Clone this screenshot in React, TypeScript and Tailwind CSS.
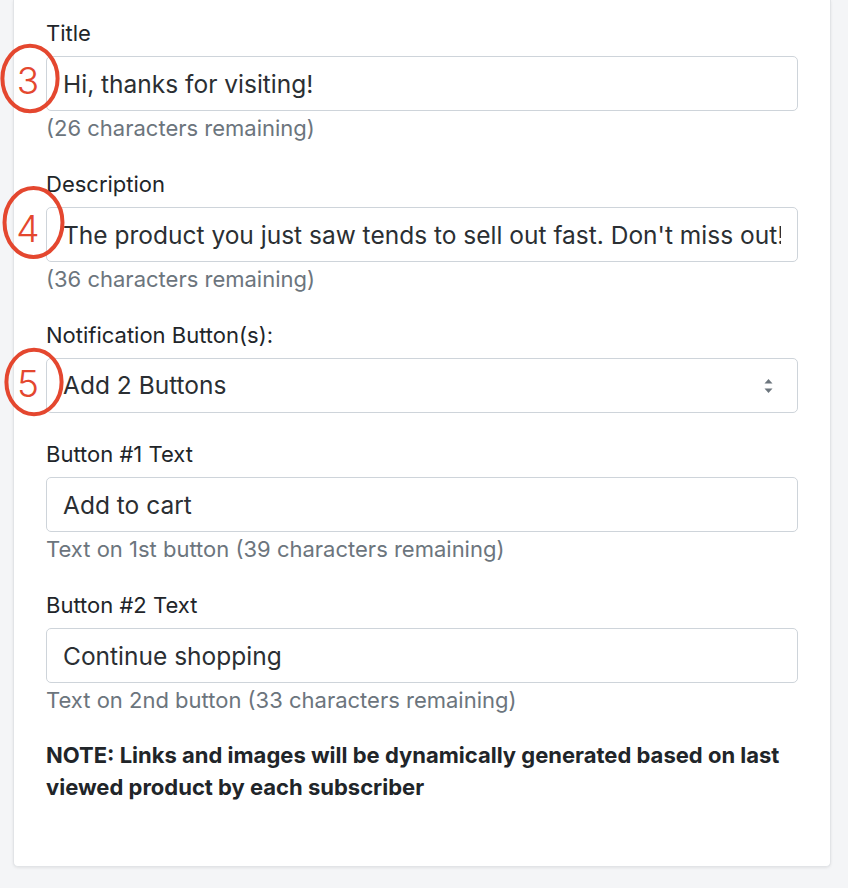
function Marker({ box, num, n }: { box: string; num: string; n: string }) {
  return (
    <div className={`absolute ${box}`}>
      <svg className="absolute inset-0 h-full w-full" viewBox="0 0 100 100" preserveAspectRatio="none">
        <ellipse cx="50" cy="50" rx="46" ry="46" fill="none" stroke="#e4472f" vectorEffect="non-scaling-stroke" style={{ strokeWidth: 4 }} />
      </svg>
      <span className={`absolute ${num} -translate-x-1/2 -translate-y-1/2 text-[37px] leading-none font-light text-[#e4472f]`}>
        {n}
      </span>
    </div>
  );
}

function Field({ label, value, help }: { label: string; value: string; help?: string }) {
  return (
    <div className="mb-[26px]">
      <label className="block text-[22px] leading-[30px] text-[#212529] mb-2">{label}</label>
      <input
        readOnly
        value={value}
        className="block w-full h-[55px] px-4 rounded-[5px] border border-[#ced4da] bg-white text-[24.5px] text-[#2b2f33] outline-none"
      />
      {help && <p className="mt-0.5 text-[22px] leading-[30px] text-[#6c757d]">{help}</p>}
    </div>
  );
}

export default function App() {
  return (
    <div className="relative min-h-[888px] bg-[#f4f5f7] font-['Inter',sans-serif]">
      <div className="ml-[13px] w-[818px] bg-white border border-t-0 border-[#e2e4e7] rounded-b-[5px] shadow-[0_1px_3px_rgba(0,0,0,0.08)] px-8 pt-[18px] pb-[63px]">
        <Field label="Title" value="Hi, thanks for visiting!" help="(26 characters remaining)" />
        <Field
          label="Description"
          value="The product you just saw tends to sell out fast. Don't miss out!"
          help="(36 characters remaining)"
        />
        <div className="mb-[26px]">
          <label className="block text-[22px] leading-[30px] text-[#212529] mb-2">Notification Button(s):</label>
          <div className="flex items-center justify-between h-[55px] pl-4 pr-6 rounded-[5px] border border-[#ced4da] bg-white">
            <span className="text-[24.5px] text-[#2b2f33]">Add 2 Buttons</span>
            <svg width="9" height="16" viewBox="0 0 9 16">
              <path d="M4.5 1 L8.5 5.5 H0.5 Z" fill="#6c757d" />
              <path d="M4.5 15 L8.5 10.5 H0.5 Z" fill="#6c757d" />
            </svg>
          </div>
        </div>
        <Field label="Button #1 Text" value="Add to cart" help="Text on 1st button (39 characters remaining)" />
        <Field label="Button #2 Text" value="Continue shopping" help="Text on 2nd button (33 characters remaining)" />
        <p className="-mt-0.5 text-[22px] leading-[32px] font-bold text-[#212529]">
          NOTE: Links and images will be dynamically generated based on last viewed product by each subscriber
        </p>
      </div>

      <Marker box="left-0 top-[43px] w-[60px] h-[71px]" num="left-[28px] top-[37px]" n="3" />
      <Marker box="left-[2px] top-[185px] w-[63px] h-[75px]" num="left-[26px] top-[43px]" n="4" />
      <Marker box="left-[4px] top-[347px] w-[60px] h-[70px]" num="left-[24px] top-[36px]" n="5" />
    </div>
  );
}
